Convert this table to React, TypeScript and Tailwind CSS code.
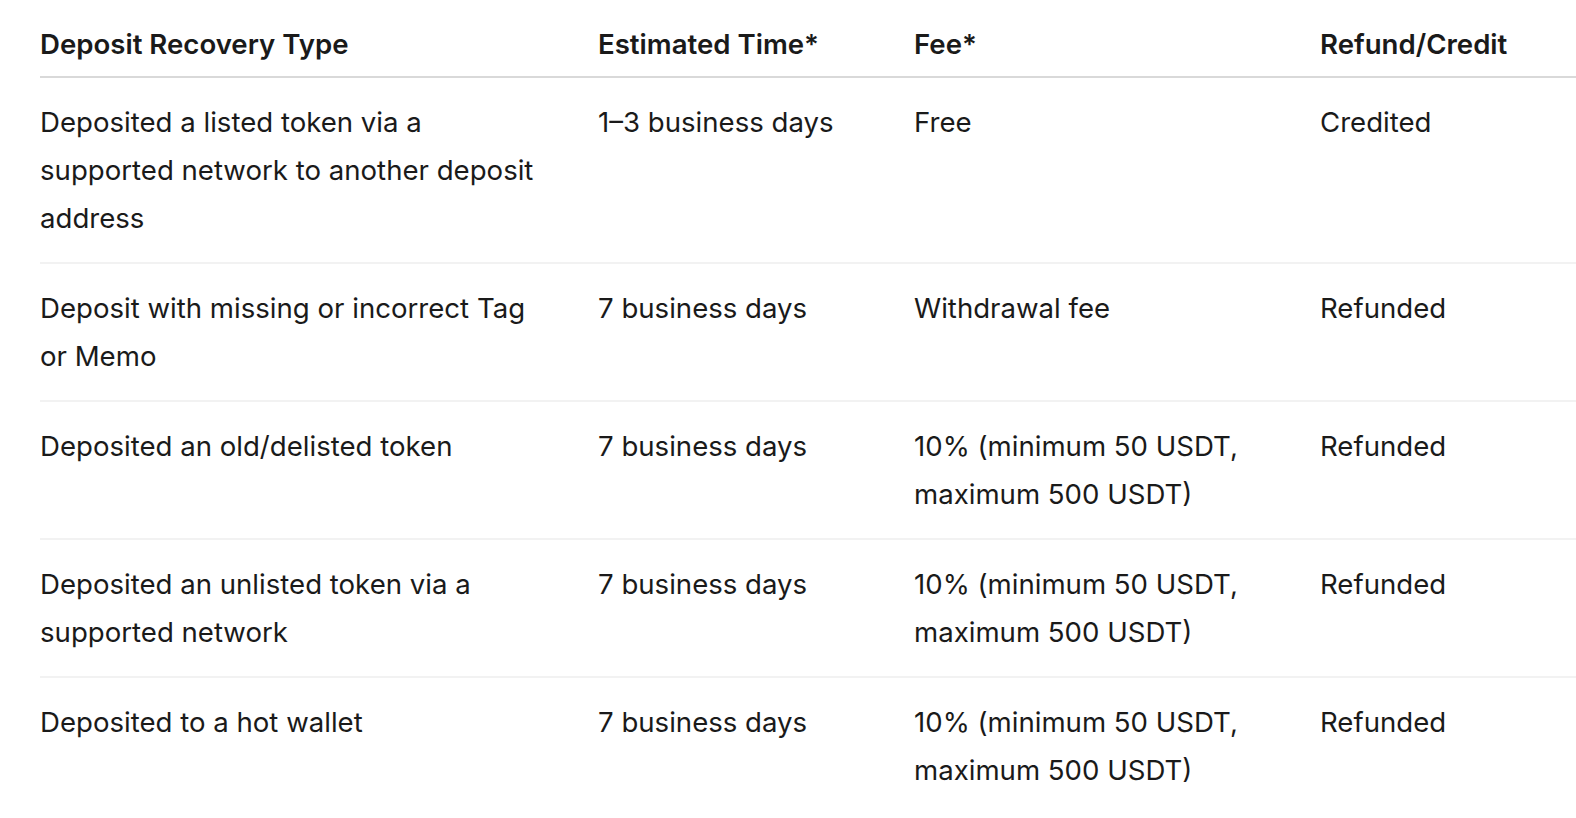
type Row = {
  type: string;
  time: string;
  fee: string;
  result: string;
};

const rows: Row[] = [
  {
    type: "Deposited a listed token via a supported network to another deposit address",
    time: "1–3 business days",
    fee: "Free",
    result: "Credited",
  },
  {
    type: "Deposit with missing or incorrect Tag or Memo",
    time: "7 business days",
    fee: "Withdrawal fee",
    result: "Refunded",
  },
  {
    type: "Deposited an old/delisted token",
    time: "7 business days",
    fee: "10% (minimum 50 USDT, maximum 500 USDT)",
    result: "Refunded",
  },
  {
    type: "Deposited an unlisted token via a supported network",
    time: "7 business days",
    fee: "10% (minimum 50 USDT, maximum 500 USDT)",
    result: "Refunded",
  },
  {
    type: "Deposited to a hot wallet",
    time: "7 business days",
    fee: "10% (minimum 50 USDT, maximum 500 USDT)",
    result: "Refunded",
  },
];

export default function App() {
  return (
    <div className="min-h-screen w-full overflow-hidden bg-white pl-10 font-['Inter',sans-serif] text-[#1a1a1a]">
      <table className="w-[1536px] table-fixed border-collapse text-left text-[27.6px] leading-[48px]">
        <colgroup>
          <col className="w-[558px]" />
          <col className="w-[316px]" />
          <col className="w-[406px]" />
          <col />
        </colgroup>
        <thead>
          <tr className="border-b-2 border-[#d9d9d9]">
            <th className="pr-12 pt-5 pb-2 font-semibold">Deposit Recovery Type</th>
            <th className="pr-12 pt-5 pb-2 font-semibold">Estimated Time*</th>
            <th className="pr-12 pt-5 pb-2 font-semibold">Fee*</th>
            <th className="pr-12 pt-5 pb-2 font-semibold">Refund/Credit</th>
          </tr>
        </thead>
        <tbody>
          {rows.map((r, i) => (
            <tr
              key={i}
              className={i < rows.length - 1 ? "border-b-2 border-[#f2f2f2]" : ""}
            >
              <td className="py-5 pr-12 align-top">{r.type}</td>
              <td className="py-5 pr-12 align-top">{r.time}</td>
              <td className="py-5 pr-12 align-top">{r.fee}</td>
              <td className="py-5 pr-12 align-top">{r.result}</td>
            </tr>
          ))}
        </tbody>
      </table>
    </div>
  );
}
